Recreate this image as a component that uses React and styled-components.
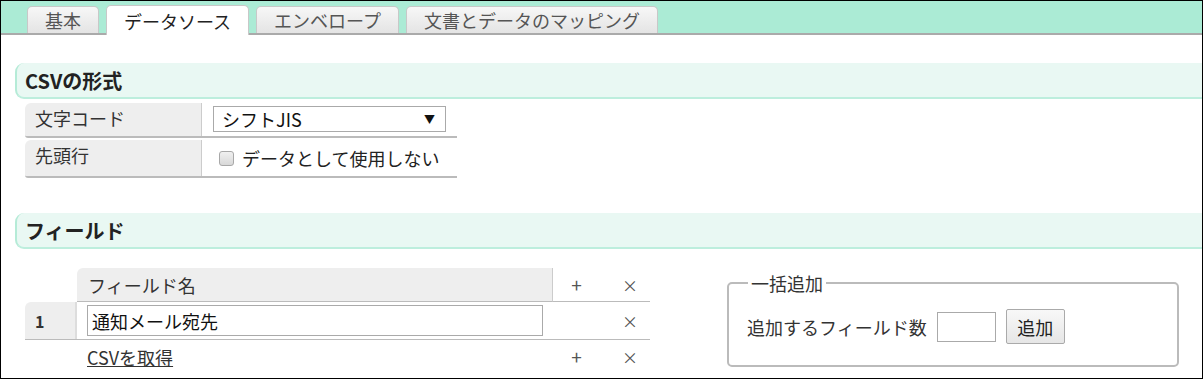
import React from "react";
import styled, { createGlobalStyle } from "styled-components";

const Global = createGlobalStyle`
  html, body { margin: 0; padding: 0; background: #fff; }
  body { font-family: "Noto Sans CJK JP", "Noto Sans", sans-serif; color: #333; }
  * { box-sizing: border-box; }
`;

const Frame = styled.div`
  width: 1203px;
  height: 379px;
  border: 1px solid #000;
  overflow: hidden;
  background: #fff;
`;

const TabBar = styled.div`
  display: flex;
  align-items: flex-end;
  gap: 7px;
  height: 34px;
  padding-left: 26px;
  background: #abebd5;
  border-bottom: 2px solid #aaa;
`;

const Tab = styled.div`
  height: ${(p) => (p.$active ? "30px" : "27px")};
  margin-bottom: ${(p) => (p.$active ? "-2px" : "0")};
  padding: 0 17px;
  display: flex;
  align-items: center;
  font-size: 18px;
  line-height: 1;
  color: ${(p) => (p.$active ? "#222" : "#555")};
  background: ${(p) =>
    p.$active ? "#fff" : "linear-gradient(#f7f7f7, #e4e4e4)"};
  border: 1px solid #c8c8c8;
  border-bottom: none;
  border-radius: 5px 5px 0 0;
`;

const Content = styled.div`
  padding: 28px 0 0 14px;
`;

const SectionHead = styled.h2`
  margin: 0;
  height: 36px;
  display: flex;
  align-items: center;
  padding-left: 8px;
  font-size: 20px;
  font-weight: 700;
  color: #222;
  background: #e9f8f3;
  border-left: 2px solid #b5ebd7;
  border-bottom: 2px solid #bdeedd;
  border-radius: 9px 0 0 9px;
`;

const FormTable = styled.div`
  margin: 4px 0 0 10px;
  width: 432px;
  display: flex;
  flex-direction: column;
  gap: 2px;
`;

const FormRow = styled.div`
  display: grid;
  grid-template-columns: 177px 255px;
  height: ${(p) => p.$h}px;
  border-bottom: 2px solid #bbb;
  border-radius: 6px 0 0 3px;
  overflow: hidden;
`;

const LabelCell = styled.div`
  background: #eee;
  border-right: 1px solid #ccc;
  padding: 3px 0 0 10px;
  font-size: 18px;
  line-height: 24px;
  color: #333;
`;

const ValueCell = styled.div`
  display: flex;
  align-items: ${(p) => (p.$top ? "flex-start" : "center")};
  padding: ${(p) => (p.$top ? "3px 10px 0 11px" : "0 10px 0 17px")};
  gap: 8px;
  font-size: 18px;
  color: #222;
`;

const SelectBox = styled.div`
  width: 233px;
  height: 26px;
  border: 1px solid #aaa;
  display: flex;
  align-items: center;
  justify-content: space-between;
  padding: 0 10px 0 8px;
  font-size: 18px;
  line-height: 1;
  color: #111;
  background: #fff;
`;

const Arrow = styled.span`
  font-size: 11px;
  color: #111;
`;

const Check = styled.span`
  width: 15px;
  height: 15px;
  border: 1px solid #a8a8a8;
  border-radius: 3px;
  background: linear-gradient(#f0f0f0, #d8d8d8);
  flex: none;
`;

const Gap = styled.div`
  height: ${(p) => p.$h}px;
`;

const FieldArea = styled.div`
  display: flex;
  align-items: flex-start;
  gap: 77px;
  margin: 19px 0 0 10px;
`;

const FieldTable = styled.div`
  width: 625px;
`;

const FieldRow = styled.div`
  display: grid;
  grid-template-columns: 52px 476px 47px 50px;
  height: ${(p) => p.$h}px;
  border-bottom: ${(p) => (p.$line ? "1px solid #bbb" : "none")};
`;

const HeadCell = styled.div`
  background: #eee;
  border-right: 1px solid #ccc;
  border-radius: 6px 0 0 0;
  display: flex;
  align-items: center;
  padding-left: 11px;
  font-size: 18px;
  color: #333;
  border-bottom: 1px solid #bbb;
`;

const HeadBlank = styled.div`
  border-bottom: ${(p) => (p.$line ? "1px solid #bbb" : "none")};
  display: flex;
  align-items: center;
  justify-content: center;
  padding-left: ${(p) => (p.$small ? 10 : 0)}px;
  font-size: ${(p) => (p.$small ? 16 : 19)}px;
  color: #555;
`;

const NumCell = styled.div`
  background: #eee;
  border-right: 2px solid #ddd;
  border-radius: 6px 0 0 0;
  display: flex;
  align-items: center;
  padding-left: 10px;
  font-size: 16px;
  font-weight: 700;
  color: #333;
`;

const Cell = styled.div`
  display: flex;
  align-items: center;
  justify-content: ${(p) => (p.$center ? "center" : "flex-start")};
  padding-left: ${(p) => (p.$pad ? p.$pad : 0)}px;
  font-size: ${(p) => (p.$small ? 16 : 19)}px;
  color: #555;
`;

const TextInput = styled.div`
  width: 456px;
  height: 31px;
  border: 1px solid #aaa;
  display: flex;
  align-items: center;
  padding-left: 4px;
  font-size: 18px;
  color: #111;
`;

const Link = styled.a`
  font-size: 18px;
  color: #333;
  text-decoration: underline;
  cursor: pointer;
`;

const Fieldset = styled.fieldset`
  margin: 4px 0 0 0;
  width: 452px;
  height: 95px;
  border: 2px solid #bbb;
  border-radius: 5px;
  padding: 0 0 0 18px;
  display: flex;
  align-items: center;
  gap: 6px;
`;

const Legend = styled.legend`
  padding: 0 3px;
  margin-left: 1px;
  font-size: 18px;
  line-height: 22px;
  color: #333;
`;

const FsRow = styled.div`
  display: flex;
  align-items: center;
  gap: 10px;
  margin-top: -6px;
  font-size: 18px;
  color: #333;
`;

const SmallInput = styled.div`
  width: 59px;
  height: 30px;
  border: 1px solid #aaa;
  background: #fff;
`;

const Button = styled.div`
  width: 59px;
  height: 35px;
  border: 1px solid #aaa;
  border-radius: 2px;
  background: linear-gradient(#f8f8f8, #e6e6e6);
  display: flex;
  align-items: center;
  justify-content: center;
  font-size: 18px;
  color: #222;
`;

export default function App() {
  return (
    <>
      <Global />
      <Frame>
        <TabBar>
          <Tab>基本</Tab>
          <Tab $active>データソース</Tab>
          <Tab>エンベロープ</Tab>
          <Tab>文書とデータのマッピング</Tab>
        </TabBar>
        <Content>
          <SectionHead>CSVの形式</SectionHead>
          <FormTable>
            <FormRow $h={35}>
              <LabelCell>文字コード</LabelCell>
              <ValueCell $top>
                <SelectBox>
                  <span>シフトJIS</span>
                  <Arrow>▼</Arrow>
                </SelectBox>
              </ValueCell>
            </FormRow>
            <FormRow $h={38}>
              <LabelCell>先頭行</LabelCell>
              <ValueCell>
                <Check />
                <span>データとして使用しない</span>
              </ValueCell>
            </FormRow>
          </FormTable>
          <Gap $h={35} />
          <SectionHead>フィールド</SectionHead>
          <FieldArea>
            <FieldTable>
              <FieldRow $h={34}>
                <HeadBlank />
                <HeadCell>フィールド名</HeadCell>
                <HeadBlank $line>+</HeadBlank>
                <HeadBlank $line $small>×</HeadBlank>
              </FieldRow>
              <FieldRow $h={38} $line>
                <NumCell>1</NumCell>
                <Cell $pad={10}>
                  <TextInput>通知メール宛先</TextInput>
                </Cell>
                <Cell />
                <Cell $center $small $pad={10}>×</Cell>
              </FieldRow>
              <FieldRow $h={33}>
                <Cell />
                <Cell $pad={10}>
                  <Link>CSVを取得</Link>
                </Cell>
                <Cell $center>+</Cell>
                <Cell $center $small $pad={10}>×</Cell>
              </FieldRow>
            </FieldTable>
            <Fieldset>
              <Legend>一括追加</Legend>
              <FsRow>
                <span>追加するフィールド数</span>
                <SmallInput />
                <Button>追加</Button>
              </FsRow>
            </Fieldset>
          </FieldArea>
        </Content>
      </Frame>
    </>
  );
}
